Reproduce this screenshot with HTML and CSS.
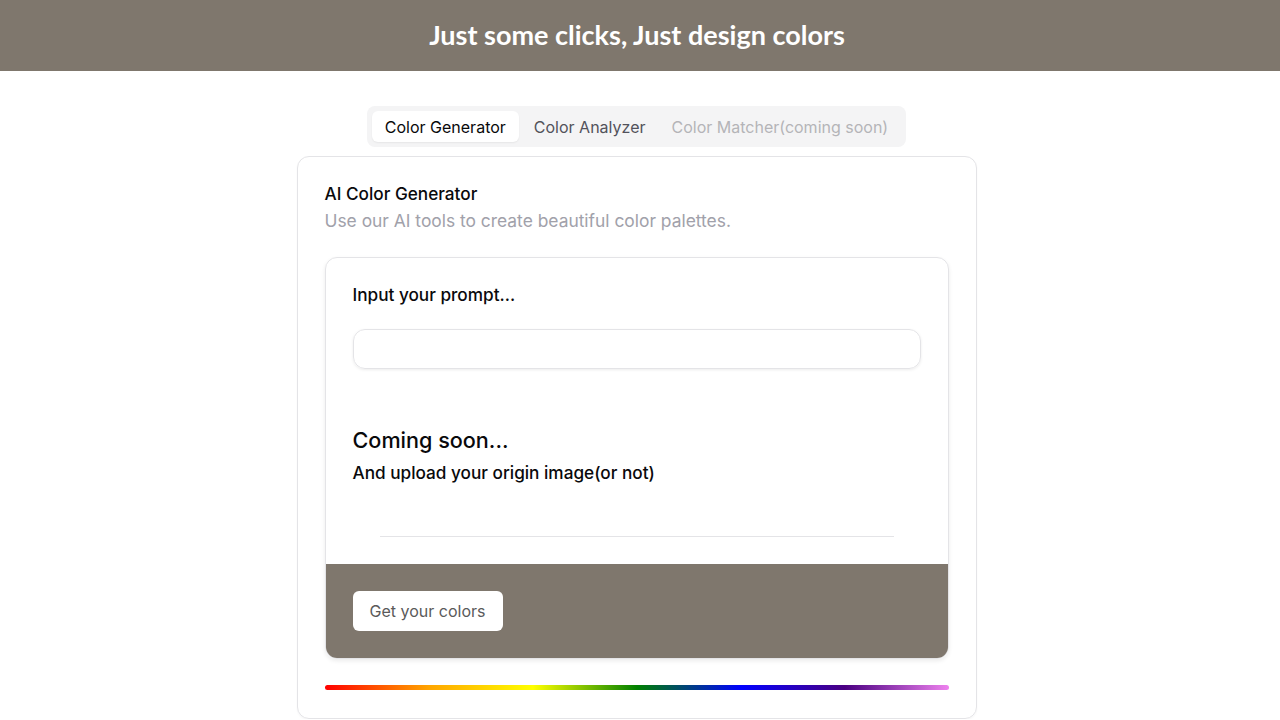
FILE: index.html
```html
<!DOCTYPE html>
<html>
<head>
<meta charset="utf-8">
<link rel="stylesheet" href="styles.css">
</head>
<body>
<header class="topbar">Just some clicks, Just design colors</header>
<main class="main">
  <nav class="tabs">
    <span class="tab active">Color Generator</span>
    <span class="tab">Color Analyzer</span>
    <span class="tab disabled">Color Matcher(coming soon)</span>
  </nav>
  <section class="card">
    <h2 class="card-title">AI Color Generator</h2>
    <p class="card-sub">Use our AI tools to create beautiful color palettes.</p>
    <div class="inner">
      <div class="inner-body">
        <label class="label">Input your prompt...</label>
        <div class="input"></div>
        <h3 class="soon">Coming soon...</h3>
        <p class="upload">And upload your origin image(or not)</p>
        <div class="sep"></div>
      </div>
      <div class="inner-foot">
        <button class="btn">Get your colors</button>
      </div>
    </div>
    <div class="rainbow"></div>
  </section>
</main>
</body>
</html>
```
FILE: styles.css
```css
* { box-sizing: border-box; }
html, body { margin: 0; padding: 0; background: #fff; }
body { font-family: Inter, "Liberation Sans", sans-serif; color: #09090b; }
.topbar {
  height: 71px;
  background: #7f776d;
  color: #fff;
  font-family: Lato, sans-serif;
  font-weight: 700;
  font-size: 27px;
  display: flex;
  align-items: center;
  justify-content: center;
  padding-bottom: 2px;
  padding-right: 6px;
}
.main {
  display: flex;
  flex-direction: column;
  align-items: center;
  padding-top: 35px;
  padding-right: 7px;
}
.tabs {
  display: flex;
  background: #f4f4f5;
  border-radius: 8px;
  padding: 5px;
  height: 41px;
}
.tab {
  display: flex;
  align-items: center;
  padding: 0 13px;
  font-size: 16px;
  color: #52525b;
  border-radius: 6px;
  height: 31px;
}
.tab.active {
  background: #fff;
  color: #09090b;
  margin-right: 2px;
  box-shadow: 0 1px 2px rgba(0,0,0,0.06);
}
.tab.disabled { color: #b4b4b8; }
.card {
  margin-top: 9px;
  width: 680px;
  height: 563px;
  border: 1px solid #e4e4e7;
  border-radius: 12px;
  padding: 26px 27px 0 27px;
  box-shadow: 0 1px 2px rgba(0,0,0,0.04);
}
.card-title {
  margin: 0;
  font-size: 17.2px;
  font-weight: 500;
  line-height: 22px;
}
.card-sub {
  margin: 5px 0 0;
  font-size: 17.4px;
  color: #a1a1aa;
  line-height: 22px;
}
.inner {
  margin-top: 25px;
  border: 1px solid #e4e4e7;
  border-radius: 12px;
  overflow: hidden;
  box-shadow: 0 2px 4px rgba(0,0,0,0.08);
}
.inner-body {
  padding: 26px 27px 27px 27px;
}
.label {
  display: block;
  font-size: 17.2px;
  font-weight: 500;
  line-height: 22px;
}
.input {
  margin-top: 23px;
  height: 40px;
  border: 1px solid #e4e4e7;
  border-radius: 12px;
  box-shadow: 0 1px 3px rgba(0,0,0,0.08);
}
.soon {
  margin: 57px 0 0;
  font-size: 21.6px;
  font-weight: 500;
  line-height: 28px;
}
.upload {
  margin: 8px 0 0;
  font-size: 17.2px;
  font-weight: 500;
  line-height: 22px;
}
.sep {
  margin: 52px 27px 0;
  height: 1px;
  background: #e4e4e7;
}
.inner-foot {
  background: #7f776d;
  height: 94px;
  padding: 27px 27px;
}
.btn {
  height: 40px;
  width: 150px;
  border: none;
  border-radius: 6px;
  background: #fff;
  color: #5a5a5a;
  font-family: Inter, "Liberation Sans", sans-serif;
  font-size: 16px;
  padding: 0;
}
.rainbow {
  margin-top: 26px;
  height: 5px;
  border-radius: 3px;
  background: linear-gradient(to right, red, orange, yellow, green, blue, indigo, violet);
}
```
